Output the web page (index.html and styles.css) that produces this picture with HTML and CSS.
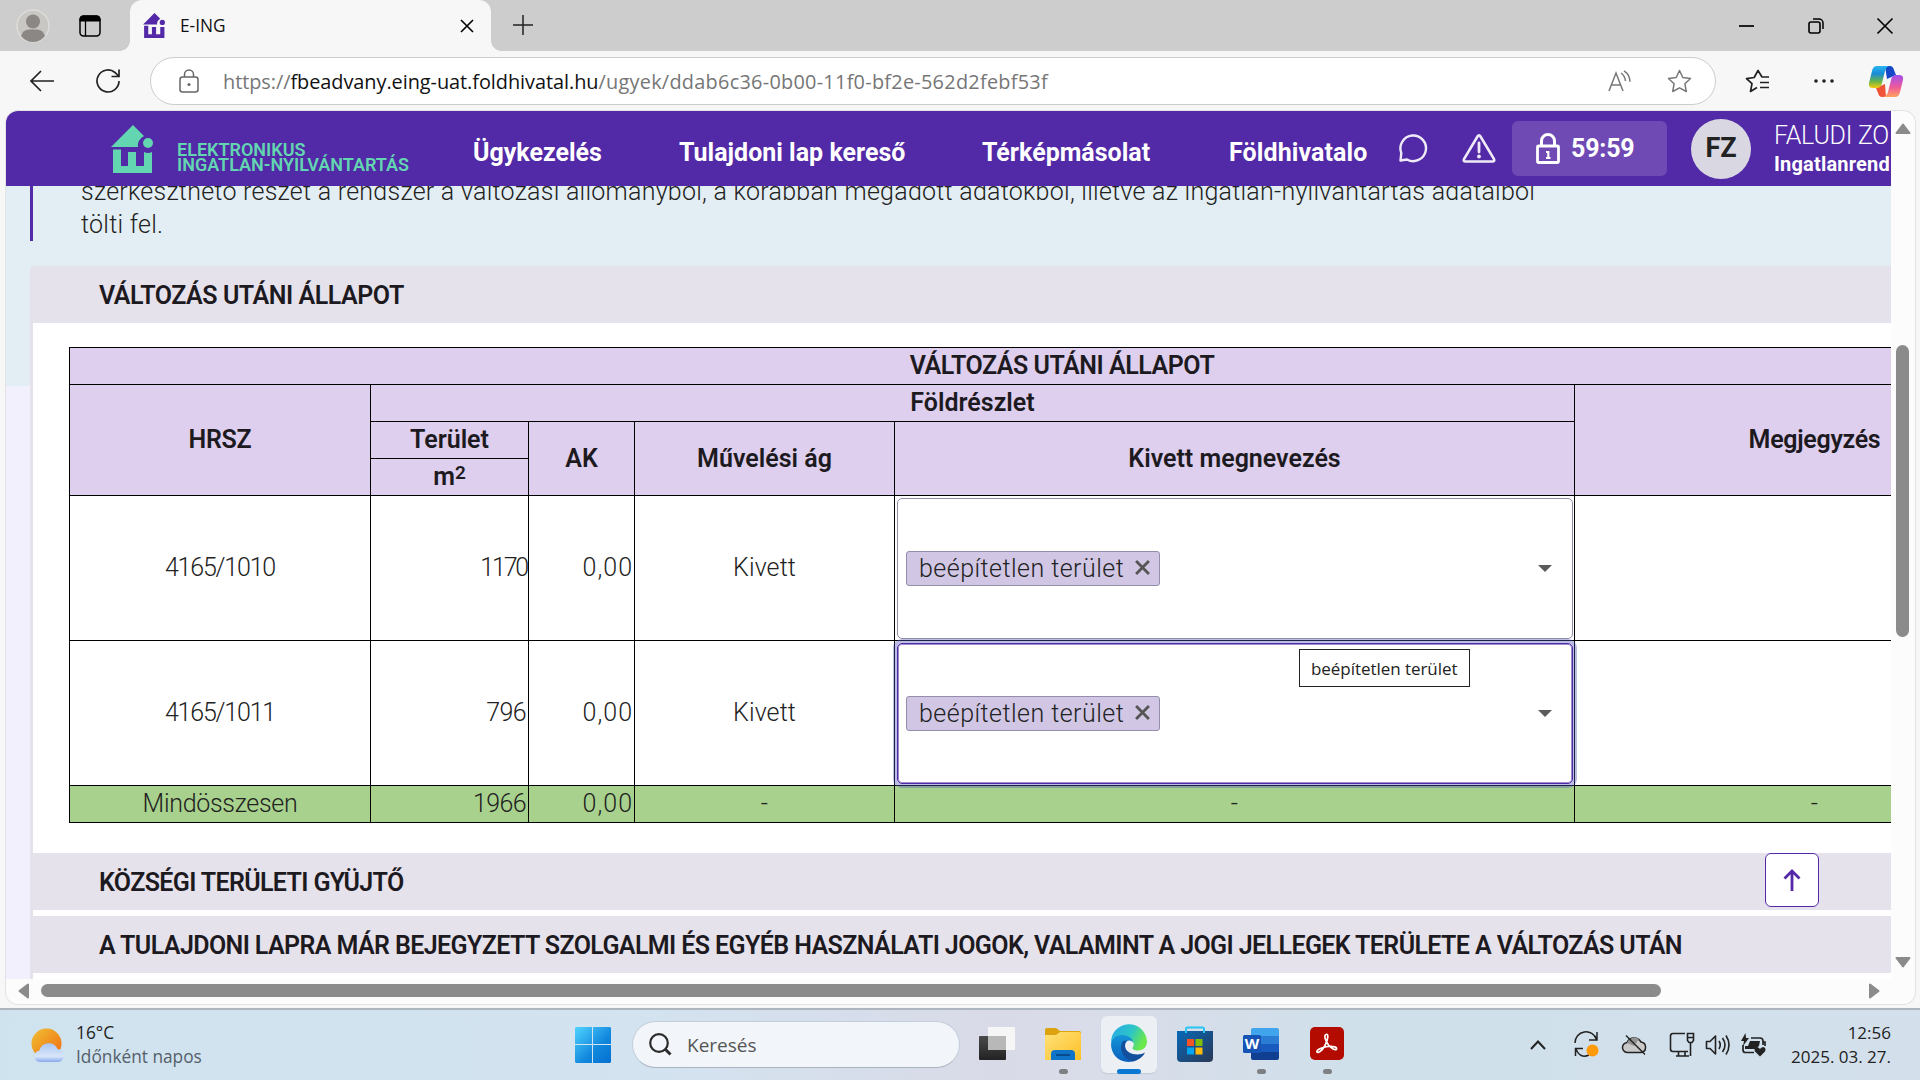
FILE: index.html
```html
<!DOCTYPE html>
<html lang="hu">
<head>
<meta charset="utf-8">
<title>E-ING</title>
<link rel="stylesheet" href="styles.css">
</head>
<body>
<header class="tabbar">
  <svg class="profile" width="34" height="34" viewBox="0 0 34 34"><circle cx="17" cy="17" r="16" fill="#c9c7c4" stroke="#dedcd9" stroke-width="1.5"/><circle cx="17" cy="12.500" r="7" fill="#8a8785"/><path d="M5 27q2-6.500 8-6.500h8q6 0 8 6.500-5 6-12 6t-12-6z" fill="#8a8785"/></svg>
  <svg class="spaces" width="22" height="22" viewBox="0 0 22 22"><rect x="1" y="1" width="20" height="20" rx="3.500" fill="none" stroke="#000" stroke-width="1.500"/><path d="M1 6V4a3 3 0 0 1 3-3h14a3 3 0 0 1 3 3v2z" stroke="#000"/><path d="M6.500 6v15" stroke="#000" stroke-width="1.300"/></svg>
  <div class="tab">
    <svg class="favicon" width="22" height="25" viewBox="0 0 42 48"><g fill="#5329a8"><path d="M22 0 0 22h27q-1-7 6-11z"/><circle cx="37" cy="18" r="5"/><path d="M2 24.500h8V41h7V27h8v14h8V27h8v21H2z"/></g></svg>
    <span class="tab-title">E-ING</span>
    <svg class="tab-close" width="14" height="14" viewBox="0 0 14 14"><path d="m1 1 12 12M13 1 1 13" stroke="#000" stroke-width="1.600"/></svg>
  </div>
  <svg class="newtab" width="22" height="22" viewBox="0 0 22 22"><path d="M11 1v20M1 11h20" stroke="#222" stroke-width="1.500"/></svg>
  <div class="window-buttons">
    <svg width="16" height="16" viewBox="0 0 16 16"><path d="M0 8h15" stroke="#000" stroke-width="1.700"/></svg>
    <svg width="16" height="16" viewBox="0 0 16 16"><rect x="1" y="4" width="11" height="11" rx="2" fill="none" stroke="#000" stroke-width="1.600"/><path d="M5 1h6a4 4 0 0 1 4 4v6" fill="none" stroke="#000" stroke-width="1.500"/></svg>
    <svg width="16" height="16" viewBox="0 0 16 16"><path d="m.5.500 15 15m0-15-15 15" stroke="#000" stroke-width="1.600"/></svg>
  </div>
</header>

<nav class="toolbar">
  <svg class="back" width="26" height="22" viewBox="0 0 26 22"><path d="M12 1 2 11l10 10M2 11h23" fill="none" stroke="#222" stroke-width="1.700"/></svg>
  <svg class="reload" width="26" height="26" viewBox="0 0 26 26"><path d="M24 13A11 11 0 1 1 20 4.500L23.500 8M24 1.500V8.500h-7.500" fill="none" stroke="#222" stroke-width="1.700"/></svg>
  <div class="address">
    <svg class="site-lock" width="20" height="24" viewBox="0 0 20 24"><rect x="1" y="8" width="18" height="15" rx="2.500" fill="none" stroke="#666" stroke-width="1.500"/><path d="M5.500 8V5.500a4.500 4.500 0 0 1 9 0V8" fill="none" stroke="#666" stroke-width="1.500"/><circle cx="10" cy="15.500" r="1.500" fill="#666"/></svg>
    <p class="url">https://<b>fbeadvany.eing-uat.foldhivatal.hu</b><span class="url-path">/ugyek/ddab6c36-0b00-11f0-bf2e-562d2febf53f</span></p>
    <svg class="read-aloud" width="24" height="22" viewBox="0 0 24 22"><path d="m1 21 7-18 7 18M3.500 15h9M13 3q4 3 4.500 8M16 .8q6 4 6 11" fill="none" stroke="#777" stroke-width="1.500"/></svg>
    <svg class="star" width="25" height="24" viewBox="0 0 25 24"><path d="m12.500 1.500 3.300 7 7.700 1-5.600 5.300 1.400 7.700-6.800-3.700-6.800 3.700 1.400-7.700L1.500 9.500l7.700-1z" fill="none" stroke="#777" stroke-width="1.500" stroke-linejoin="round"/></svg>
  </div>
  <svg class="favorites" width="25" height="24" viewBox="0 0 25 24"><path d="M24 8h-7L13 1.500 9.200 8.500 1.500 9.700l5.500 5L5.500 22.500l6.500-4M15 13.500h9M15 18.500h9" fill="none" stroke="#222" stroke-width="1.700" stroke-linejoin="round"/></svg>
  <svg class="more" width="20" height="6" viewBox="0 0 20 6"><g fill="#222"><circle cx="2" cy="3" r="1.800"/><circle cx="10" cy="3" r="1.800"/><circle cx="18" cy="3" r="1.800"/></g></svg>
  <svg class="copilot" width="34" height="31" viewBox="0 0 34 31">
    <defs>
      <linearGradient id="cpA" x1="0" y1="0" x2="0" y2="1"><stop offset="0" stop-color="#29b5ee"/><stop offset=".35" stop-color="#188bd8"/><stop offset=".7" stop-color="#68b54b"/><stop offset="1" stop-color="#f6c90e"/></linearGradient>
      <linearGradient id="cpB" x1="0" y1="0" x2="0" y2="1"><stop offset="0" stop-color="#a24ff0"/><stop offset=".55" stop-color="#ee5a99"/><stop offset="1" stop-color="#ffa25a"/></linearGradient>
    </defs>
    <path d="M16 0h5q3 0 4 4l2 5-9 4z" fill="#1547c8"/>
    <path d="M17 31h-4q-3 0-4-4l-2-5 9-4z" fill="#ef5338"/>
    <path d="M8 0h12q-3 1-4 5l-3 12q-1 5-5 5H4q-5 0-4-5l3-12q1-5 5-5z" fill="url(#cpA)"/>
    <path d="M26 31H14q4-1 5-5l3-12q1-5 5-5h3q5 0 4 5l-3 12q-1 5-5 5z" fill="url(#cpB)"/>
  </svg>
</nav>

<div class="viewport">
  <div class="page">
    <div class="app-header">
      <svg class="logo" width="42" height="48" viewBox="0 0 42 48"><g fill="#63d5b1"><path d="M22 0 0 22h27q-1-7 6-11z"/><circle cx="37" cy="18" r="5"/><path d="M2 24.500h8V41h7V27h8v14h8V27q4 2 8 0v21H2z"/></g></svg>
      <div class="brand"><span class="brand-top">ELEKTRONIKUS</span><span>INGATLAN-NYILVÁNTARTÁS</span></div>
      <a class="nav nav-cases">Ügykezelés</a>
      <a class="nav nav-search">Tulajdoni lap kereső</a>
      <a class="nav nav-map">Térképmásolat</a>
      <a class="nav nav-office">Földhivatalo</a>
      <svg class="chat" width="30" height="30" viewBox="0 0 30 30"><path d="M2.500 27.500 3.300 20A12.800 12.800 0 1 1 9 26.500z" fill="none" stroke="#efeaf8" stroke-width="2.400" stroke-linejoin="round"/></svg>
      <svg class="warn" width="34" height="30" viewBox="0 0 34 30"><path d="M15.500 3.500q1.500-2.500 3 0L32 26q1 2.500-1.500 2.500h-27Q1 28.500 2 26z" fill="none" stroke="#efeaf8" stroke-width="2.600"/><path d="M17 10v9" stroke="#efeaf8" stroke-width="2.800" stroke-linecap="round"/><circle cx="17" cy="23.500" r="1.900" fill="#efeaf8"/></svg>
      <div class="session">
        <svg width="24" height="31" viewBox="0 0 24 31"><rect x="1.500" y="13" width="21" height="16.500" rx="1" fill="none" stroke="#fff" stroke-width="2.800"/><path d="M5.500 13V8a6.500 6.500 0 0 1 13 0v5" fill="none" stroke="#fff" stroke-width="3"/><path d="M12.300 18v7M10 19h3M10 25h4.500" stroke="#fff" stroke-width="2.200"/></svg>
        <span>59:59</span>
      </div>
      <div class="avatar">FZ</div>
      <div class="user"><span class="user-name">FALUDI ZO</span><span class="user-role">Ingatlanrend</span></div>
    </div>

    <div class="content">
      <div class="notice"><p>szerkeszthető részét a rendszer a változási állományból, a korábban megadott adatokból, illetve az ingatlan-nyilvántartás adataiból<br>tölti fel.</p></div>
      <main class="sections">
        <h2 class="section-title">VÁLTOZÁS UTÁNI ÁLLAPOT</h2>
        <div class="panel">
          <table class="land">
            <colgroup><col class="c-hrsz"><col class="c-area"><col class="c-ak"><col class="c-branch"><col class="c-name"><col class="c-note"></colgroup>
            <thead>
              <tr><th colspan="6">VÁLTOZÁS UTÁNI ÁLLAPOT</th></tr>
              <tr><th rowspan="3" class="tight">HRSZ</th><th colspan="4">Földrészlet</th><th rowspan="3" class="tight">Megjegyzés</th></tr>
              <tr><th>Terület</th><th rowspan="2">AK</th><th rowspan="2">Művelési ág</th><th rowspan="2">Kivett megnevezés</th></tr>
              <tr><th>m<sup>2</sup></th></tr>
            </thead>
            <tbody>
              <tr class="parcel"><td class="digits">4165/1010</td><td class="num narrow">1170</td><td class="num dec">0,00</td><td>Kivett</td>
                <td class="cell-select"><div class="select"><span class="chip">beépítetlen terület<svg width="15" height="15" viewBox="0 0 14 14"><path d="m1 1 12 12m0-12-12 12" stroke="#555" stroke-width="2.600"/></svg></span><i class="caret"></i></div></td><td></td></tr>
              <tr class="parcel"><td class="digits">4165/1011</td><td class="num">796</td><td class="num dec">0,00</td><td>Kivett</td>
                <td class="cell-select"><div class="select focused"><span class="chip">beépítetlen terület<svg width="15" height="15" viewBox="0 0 14 14"><path d="m1 1 12 12m0-12-12 12" stroke="#555" stroke-width="2.600"/></svg></span><i class="caret"></i><span class="tooltip">beépítetlen terület</span></div></td><td></td></tr>
              <tr class="total"><td class="sum">Mindösszesen</td><td class="num">1966</td><td class="num dec">0,00</td><td>-</td><td>-</td><td>-</td></tr>
            </tbody>
          </table>
        </div>
        <h2 class="section-title middle">KÖZSÉGI TERÜLETI GYÜJTŐ</h2>
        <h2 class="section-title last">A TULAJDONI LAPRA MÁR BEJEGYZETT SZOLGALMI ÉS EGYÉB HASZNÁLATI JOGOK, VALAMINT A JOGI JELLEGEK TERÜLETE A VÁLTOZÁS UTÁN</h2>
      </main>
      <div class="to-top"><svg width="18" height="22" viewBox="0 0 18 22"><path d="M9 22V2M1.500 9.500 9 2l7.500 7.500" fill="none" stroke="#5329a8" stroke-width="2.800"/></svg></div>
    </div>
  </div>
  <div class="vscroll">
    <svg width="16" height="12" viewBox="0 0 16 12"><path d="M8 1.500 14.500 10h-13z" fill="#8b8b8b" stroke="#8b8b8b" stroke-width="2" stroke-linejoin="round"/></svg>
    <div class="vthumb"></div>
    <svg class="vdown" width="16" height="12" viewBox="0 0 16 12"><path d="M8 10.500 14.500 2h-13z" fill="#8b8b8b" stroke="#8b8b8b" stroke-width="2" stroke-linejoin="round"/></svg>
  </div>
  <div class="hscroll">
    <svg width="12" height="16" viewBox="0 0 12 16"><path d="M1.500 8 10 1.500v13z" fill="#8b8b8b" stroke="#8b8b8b" stroke-width="2" stroke-linejoin="round"/></svg>
    <div class="hthumb"></div>
    <svg class="hright" width="12" height="16" viewBox="0 0 12 16"><path d="M10.500 8 2 1.500v13z" fill="#8b8b8b" stroke="#8b8b8b" stroke-width="2" stroke-linejoin="round"/></svg>
  </div>
</div>

<footer class="taskbar">
  <div class="weather">
    <svg width="34" height="34" viewBox="0 0 34 34">
      <defs><linearGradient id="sun" x1="0" y1="0" x2="1" y2="1"><stop offset="0" stop-color="#f0c033"/><stop offset="1" stop-color="#f06a10"/></linearGradient><linearGradient id="cloud" x1="0" y1="0" x2="0" y2="1"><stop offset="0" stop-color="#a9c5f3"/><stop offset=".7" stop-color="#d9e6fa"/><stop offset="1" stop-color="#86a8ec"/></linearGradient></defs>
      <circle cx="15.500" cy="15.500" r="15" fill="url(#sun)"/><path d="M9 34a5.800 5.800 0 0 1-.5-11.500 9.500 9.500 0 0 1 18-1.500A6.600 6.600 0 0 1 28 34z" fill="url(#cloud)"/>
    </svg>
    <div class="weather-text"><span>16°C</span><span class="muted">Időnként napos</span></div>
  </div>
  <svg class="start" width="36" height="36" viewBox="0 0 36 36"><defs><linearGradient id="win" x1="0" y1="0" x2="1" y2="1" gradientUnits="objectBoundingBox"><stop offset="0" stop-color="#4fd4ff"/><stop offset=".6" stop-color="#1187dd"/><stop offset="1" stop-color="#0470d0"/></linearGradient></defs><path d="M1 0h16v17H0V1zM18 0h17l1 1v16H18zM0 18h17v18H1l-1-1zM18 18h18v17l-1 1H18z" fill="url(#win)"/></svg>
  <div class="search">
    <svg width="23" height="23" viewBox="0 0 23 23"><circle cx="10" cy="10" r="8.800" fill="none" stroke="#2b2b2b" stroke-width="2.200"/><path d="m16 16 5.500 5.500" stroke="#2b2b2b" stroke-width="3"/></svg>
    <span>Keresés</span>
  </div>
  <div class="apps">
    <div class="app"><svg width="36" height="36" viewBox="0 0 36 36"><defs><linearGradient id="tv" x1="0" y1="0" x2="0" y2="1"><stop offset="0" stop-color="#4a4a4a"/><stop offset="1" stop-color="#222"/></linearGradient></defs><rect y="10" width="27" height="24" rx="1" fill="url(#tv)"/><rect x="9" y="1" width="27" height="23" rx="1" fill="#f6f6f6"/><path d="M9 10h18v14H9z" fill="#b8b8b8"/></svg></div>
    <div class="app running"><svg width="36" height="36" viewBox="0 0 36 36"><defs><linearGradient id="fold" x1="0" y1="0" x2="1" y2="1"><stop offset="0" stop-color="#ffe17a"/><stop offset="1" stop-color="#fcc026"/></linearGradient></defs><path d="M0 4q0-2 2-2h9l4 3h19q2 0 2 2v5H0z" fill="#dda20f"/><path d="M0 9h11l4-3h19q2 0 2 2v26H0z" fill="url(#fold)"/><path d="M6 34V28q0-4 4-4h16q4 0 4 4v6z" fill="#0f73c7"/><path d="M11 29h14" stroke="#084c8e" stroke-width="2"/></svg></div>
    <div class="app active"><svg width="36" height="36" viewBox="0 0 36 36"><defs><linearGradient id="eg1" x1="0" y1="0" x2="1" y2=".4"><stop offset="0" stop-color="#27a7ea"/><stop offset=".6" stop-color="#2ec6c6"/><stop offset="1" stop-color="#6ae84c"/></linearGradient><linearGradient id="eg2" x1="0" y1="0" x2="0" y2="1"><stop offset="0" stop-color="#1696d8"/><stop offset="1" stop-color="#0a60bd"/></linearGradient></defs><path d="M0 17A18 18 0 0 1 36 15.500c0 5-3.500 9-9 9-4 0-6.500-1.500-5-3.500 2-3 0-7-4-8C10 10 3 11 0 17z" fill="url(#eg1)"/><path d="M0 18c1-6 6-9 11-9 6 0 11 3 11 8-2-4-8-3-8 3 0 7 7 13 12 14C12 40 0 31 0 18z" fill="url(#eg2)"/><path d="M12 15c-5 8 0 18 10 20.500 6-1.500 10-5 12-9-6 4-20 2-20-7 0-3 1-4 3-5z" fill="#124f9d"/></svg></div>
    <div class="app"><svg width="36" height="36" viewBox="0 0 36 36"><defs><linearGradient id="store" x1="0" y1="0" x2="1" y2="1"><stop offset="0" stop-color="#0869b9"/><stop offset="1" stop-color="#293755"/></linearGradient></defs><path d="M0 5h36v27q0 4-4 4H4q-4 0-4-4z" fill="url(#store)"/><path d="M9 7V3q0-1.500 1.500-1.500h15Q27 1.500 27 3v4" fill="none" stroke="#27c4f4" stroke-width="2"/><path d="M10 13h7v7h-7z" fill="#f35325"/><path d="M18.500 13h7v7h-7z" fill="#81bc06"/><path d="M10 21.500h7v7h-7z" fill="#05a6f0"/><path d="M18.500 21.500h7v7h-7z" fill="#ffba08"/></svg></div>
    <div class="app running"><svg width="36" height="36" viewBox="0 0 36 36"><path d="M8 10V4q0-2 2-2h24q2 0 2 2v6z" fill="#41a5ee"/><path d="M8 10h28v8H8z" fill="#2b7cd3"/><path d="M8 18h28v8H8z" fill="#185abd"/><path d="M8 26h28v6q0 2-2 2H10q-2 0-2-2z" fill="#103f91"/><rect y="9" width="18" height="18" rx="1.500" fill="#1653b4"/><text x="9" y="23" text-anchor="middle" class="word-mark">W</text></svg></div>
    <div class="app running"><svg width="36" height="36" viewBox="0 0 36 36"><rect x="1" y="1" width="34" height="33" rx="5" fill="#b30b00"/><path d="M17 8.500c3-1 2 5-1 11-3 5.500-7 8-8 6.500-1-2 5-5 11-5.500 6-.5 9 .5 8.500 2.500-1 2-5-.5-8-4-3-4-5-10-2.500-10.500z" fill="none" stroke="#fff" stroke-width="1.700"/></svg></div>
  </div>
  <div class="tray">
    <svg width="16" height="10" viewBox="0 0 16 10"><path d="m1 9 7-7.500L15 9" fill="none" stroke="#222" stroke-width="2"/></svg>
    <svg class="sync" width="25" height="25" viewBox="0 0 25 25"><path d="M1 11A11 11 0 0 1 22.500 7.500M23 0v8h-8M15 23Q6 27 2 17M1.500 24v-7.500H9" fill="none" stroke="#222" stroke-width="1.500"/><circle cx="18.500" cy="18.500" r="6" fill="#ff9a09"/></svg>
    <svg class="onedrive" width="25" height="20" viewBox="0 0 25 20"><path d="M6 17.500a5 5 0 0 1-1-10 8 8 0 0 1 14-.5 5.300 5.300 0 0 1 0 10.500z" fill="#c9c9c9" stroke="#222" stroke-width="1.500"/><path d="M5 8a8 8 0 0 1 12-4l-5 7z" fill="#929292"/><path d="m4 .5 19 19" stroke="#222" stroke-width="1.500"/></svg>
    <svg class="network" width="25" height="25" viewBox="0 0 25 25"><path d="M16 1.500H4Q1.500 1.500 1.500 4v13Q1.500 19.500 4 19.500h15M7 24h13M9.500 20v4M16 20v4M21.500 11v13M18.500 1.500h6v7l-1.500 2h-3l-1.500-2zM18.500 5.500h6" fill="none" stroke="#222" stroke-width="1.600"/></svg>
    <svg class="sound" width="25" height="22" viewBox="0 0 25 22"><path d="M1.500 7.500H5L10.500 2v18L5 14.500H1.500zM14 7q2.500 4 0 8M17.500 4q5 7 0 14M21 1.500q6 9.500 0 19" fill="none" stroke="#222" stroke-width="1.600" stroke-linejoin="round"/></svg>
    <svg class="battery" width="25" height="24" viewBox="0 0 25 24"><path d="M10 5h9q3 0 3 3v4M2 12v5q0 2.500 2.500 2.500H13M22 9h2v4" fill="none" stroke="#222" stroke-width="1.700"/><path d="M9 8h10l-1 5-4 3H4v-3h3zM4.500 0 0 8h3l-1 5 6-8H5zM19 23.500l-5-5q-1.500-3.500 1.500-4.500 2 0 3.500 2 1.500-2 3.500-2 3 1 1.500 4.500z" fill="#222"/></svg>
    <div class="clock"><span>12:56</span><span>2025. 03. 27.</span></div>
  </div>
</footer>
</body>
</html>
```
FILE: styles.css
```css
* { box-sizing: border-box; }
body {
  margin: 0; width: 1920px; height: 1080px; overflow: hidden;
  display: flex; flex-direction: column;
  background: #f7f7f7; color: #222;
  font-family: "Open Sans", "Noto Sans", sans-serif;
}
svg { display: block; flex: none; overflow: visible; }

/* Browser chrome */
.tabbar { height: 51px; flex: none; display: flex; align-items: center; background: #cdcdcd; padding-left: 16px; }
.spaces { margin-left: 29px; }
.tab { width: 361px; height: 51px; margin-left: 29px; display: flex; align-items: center; position: relative; background: #f7f7f7; border-radius: 12px 12px 0 0; padding-left: 13px; }
.tab::before, .tab::after { content: ""; position: absolute; bottom: 0; width: 10px; height: 10px; }
.tab::before { left: -10px; background: radial-gradient(circle at 0 0, #cdcdcd 9.500px, #f7f7f7 10px); }
.tab::after { right: -10px; background: radial-gradient(circle at 100% 0, #cdcdcd 9.500px, #f7f7f7 10px); }
.tab-title { width: 280px; margin-left: 15px; font-size: 17.300px; color: #111; }
.newtab { margin: -2px 0 0 21px; }
.window-buttons { display: flex; gap: 53px; margin-left: auto; padding-right: 27px; }
.toolbar { height: 60px; flex: none; display: flex; align-items: center; padding-left: 29px; }
.reload { margin-left: 40px; }
.address { width: 1566px; height: 48px; margin-left: 29px; display: flex; align-items: center; background: #fff; border: 1px solid #ccc; border-radius: 24px; padding-left: 28px; }
.url { margin: 0; padding-left: 24px; width: 1413px; font-size: 19.900px; letter-spacing: -0.050px; color: #767676; white-space: nowrap; }
.url b { font-weight: 400; color: #111; }
.url-path { letter-spacing: .26px; }
.read-aloud { margin-left: -4px; }
.star { margin-left: 35px; }
.favorites { margin-left: 29px; }
.more { margin-left: 44px; }
.copilot { margin-left: 35px; }

/* Browser content area */
.viewport { width: 1909px; height: 893px; margin: 0 6px; flex: none; display: grid; grid-template: 868px 25px / 1885px 24px; border-radius: 12px; overflow: hidden; background: #fcfcfc; box-shadow: 0 0 0 1px #e3e3e3; }
.page { overflow: hidden; display: flex; flex-direction: column; font-family: Roboto, "Noto Sans", sans-serif; }
.vscroll { padding: 12px 0 0 4px; }
.vthumb { width: 13px; height: 292px; margin: 210px 0 0 1px; border-radius: 7px; background: #8b8b8b; }
.vdown { margin-top: 319px; }
.hscroll { grid-column: 1 / 3; display: flex; align-items: center; padding: 0 35px 2px 12px; }
.hthumb { width: 1620px; height: 13px; margin-left: 11px; border-radius: 7px; background: #8b8b8b; }
.hright { margin-left: auto; }

/* Application header */
.app-header { height: 75px; flex: none; display: flex; background: #5229a6; color: #fff; padding-left: 105px; position: relative; z-index: 1; white-space: nowrap; }
.logo { margin-top: 14px; }
.brand { width: 296px; margin: 31px 0 0 24px; display: flex; flex-direction: column; color: #63d5b1; font-size: 18px; line-height: 15px; font-weight: 600; }
.nav { margin-top: 27px; font-size: 25px; line-height: 30px; font-weight: 700; }
.nav-cases { width: 206px; }
.nav-search { width: 303px; }
.nav-map { width: 247px; }
.nav-office { width: 169px; letter-spacing: .1px; }
.chat { margin-top: 22px; }
.warn { margin: 22px 0 0 34px; }
.session { width: 155px; height: 55px; margin: 10px 0 0 16px; padding-left: 24px; display: flex; align-items: center; gap: 11px; border-radius: 6px; background: #6f4ab5; font-size: 25px; font-weight: 700; }
.session span { letter-spacing: -.2px; margin-top: -1px; }
.avatar { width: 60px; height: 60px; margin: 8px 0 0 24px; border-radius: 50%; background: #d9d7e2; color: #222; font-size: 27px; line-height: 58px; font-weight: 700; text-align: center; }
.user { width: 116px; flex: none; margin-left: 23px; display: flex; flex-direction: column; overflow: hidden; }
.user-name { margin-top: 10px; font-size: 25px; line-height: 29px; font-weight: 300; letter-spacing: -.25px; }
.user-role { margin-top: 2px; font-size: 20px; line-height: 24px; font-weight: 700; letter-spacing: .2px; }

/* Form content */
.content { height: 793px; position: relative; background: linear-gradient(#e2eef3 200px, #f1f0fc 200px); }
.notice { height: 55px; margin-left: 24px; border-left: 3px solid #5229a6; }
.notice p { margin: 0 0 0 48px; position: relative; top: -11px; font-size: 25px; line-height: 33px; font-weight: 300; letter-spacing: .26px; white-space: nowrap; color: #222; }
.sections { height: 713px; margin: 25px 0 0 24px; border-left: 3px solid #e6e2ec; border-radius: 4px 0 0; background: #fff; }
.section-title { margin: 0; height: 57px; padding-left: 66px; background: #e6e2ec; font-size: 25px; line-height: 60px; font-weight: 600; letter-spacing: -.46px; white-space: nowrap; color: #1d1a1f; }
.section-title.middle { letter-spacing: -.63px; }
.section-title.last { margin-top: 6px; letter-spacing: -.6px; }
.panel { height: 530px; padding: 24px 0 0 36px; overflow: hidden; }
.land { width: 1986px; table-layout: fixed; border-collapse: collapse; font-size: 25px; line-height: 30px; }
.c-hrsz { width: 301px; } .c-area { width: 158px; } .c-ak { width: 106px; }
.c-branch { width: 260px; } .c-name { width: 680px; } .c-note { width: 480px; }
.land th, .land td { padding: 0; border: 1px solid #000; }
.land th { height: 37px; background: #ddcfed; font-weight: 600; color: #1d1a1f; }
.land td { height: 37px; text-align: center; font-weight: 300; letter-spacing: .1px; }
.land thead tr:first-child th { letter-spacing: -.47px; }
.land th.tight { letter-spacing: -.3px; }
.land sup { font-size: 19px; line-height: 0; vertical-align: 6px; }
.land .parcel td { height: 145px; }
.land td.num { text-align: right; padding-right: 2px; letter-spacing: -.6px; }
.land td.narrow { letter-spacing: -2.2px; padding-right: 1px; }
.land td.dec { padding-right: 1px; letter-spacing: 1px; }
.land td.digits { letter-spacing: -1.2px; }
.land td.sum { letter-spacing: -.3px; }
.land .total td { background: #a8d18d; }
.land .parcel td.cell-select { padding: 2px 1px 1px 2px; }
.select { height: 141px; position: relative; display: flex; align-items: center; justify-content: space-between; padding: 0 20px 0 8px; border: 1px solid #918da9; border-radius: 5px; }
.select.focused { border-color: #5229a6; box-shadow: 0 0 0 4px rgba(78, 85, 190, .38), inset 0 0 0 1px rgba(82, 41, 166, .55); }
.chip { display: flex; align-items: center; width: 254px; height: 35px; padding-left: 12px; gap: 11px; border: 1px solid #928eab; border-radius: 3px; background: #d1c7e5; letter-spacing: .47px; line-height: 33px; white-space: nowrap; }
.chip svg { margin-top: -3px; }
.caret { border: 7px solid transparent; border-top-color: #5b5b5b; border-bottom: 0; }
.tooltip { position: absolute; left: 401px; top: 5px; width: 171px; height: 38px; padding-left: 11px; border: 1px solid #222; background: #fff; color: #222; font: 400 17px/37px "Open Sans", sans-serif; letter-spacing: -.05px; text-align: left; }
.to-top { position: absolute; left: 1759px; top: 667px; width: 54px; height: 54px; display: flex; align-items: center; justify-content: center; border: 1px solid #5229a6; border-radius: 6px; background: #fff; }

/* Taskbar */
.taskbar { height: 72px; margin-top: auto; flex: none; display: flex; align-items: center; border-top: 2px solid #adb6bf; padding-bottom: 1px; background: linear-gradient(90deg, #cfe3ee 0, #d3e3f0 33%, #d9dae7 52%, #d9dce9 57%, #cfe0ea 71%, #d3e0ec 100%); }
.weather { width: 544px; margin-left: 31px; display: flex; align-items: center; gap: 11px; }
.weather-text { display: flex; flex-direction: column; font-size: 17.300px; line-height: 24px; color: #222; }
.weather-text .muted { color: #55606a; }
.search { width: 328px; height: 47px; margin-left: 21px; padding-left: 16px; display: flex; align-items: center; gap: 15px; border: 1px solid #c3ceda; border-bottom-color: #aab4bf; border-radius: 24px; background: #f2f5f9; font-size: 19px; color: #555; }
.apps { display: flex; gap: 10px; margin-left: 9px; }
.app { width: 56px; height: 57px; display: flex; justify-content: center; padding-top: 10px; border-radius: 6px; position: relative; }
.app.active { background: #eceff4; box-shadow: 0 1px 1px #c2cad3; }
.app.running::after, .app.active::after { content: ""; position: absolute; bottom: -1px; width: 9px; height: 5px; border-radius: 3px; background: #7d7f83; }
.app.active::after { width: 24px; background: #0b78d4; }
.word-mark { font: 700 15px "Open Sans", sans-serif; fill: #fff; }
.tray { display: flex; align-items: center; margin-left: 175px; }
.sync { margin-left: 28px; }
.onedrive { margin-left: 23px; }
.network { margin-left: 22px; }
.sound { margin-left: 11px; }
.battery { margin-left: 11px; }
.clock { width: 125px; display: flex; flex-direction: column; font-size: 17px; line-height: 24px; text-align: right; color: #222; }
```
